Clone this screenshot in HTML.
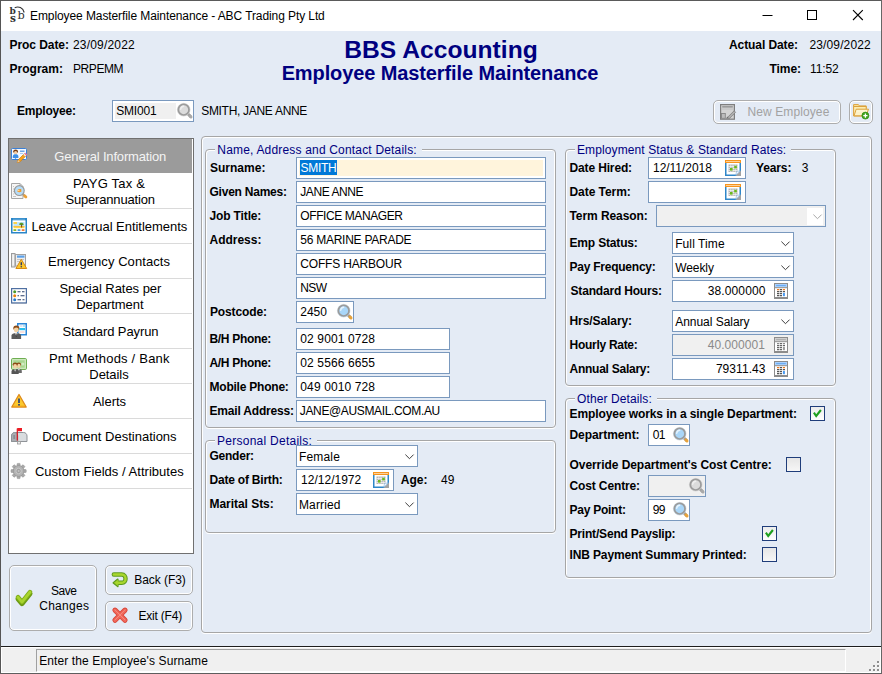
<!DOCTYPE html><html><head><meta charset='utf-8'><title>Employee Masterfile Maintenance</title><style>
*{box-sizing:border-box;margin:0;padding:0}
html,body{width:882px;height:674px;overflow:hidden;background:#fff}
body{font-family:"Liberation Sans",Arial,sans-serif;font-size:12px;color:#000;position:relative}
.a{position:absolute;white-space:nowrap}
.b{font-weight:bold}
.t{position:absolute;white-space:nowrap;line-height:14px;height:14px}
.inp{position:absolute;background:#fff;border:1px solid #7a99be;height:22px}
.dis{background:#f0f0f0}
.gb{position:absolute;border:1px solid #a6a6a6;border-radius:4px;box-shadow:inset 1px 1px 0 #fff, inset -1px 0 0 #fff, 0 1px 0 #fff}
.lg{position:absolute;background:#e4ebf5;height:4px}
.cb{position:absolute;width:15px;height:15px;background:linear-gradient(#ececec,#fff);border:1px solid #1f3d7a}
.btn{position:absolute;border:1px solid #adadad;border-radius:5px;box-shadow:inset 0 0 0 1px #fff;background:#e4ebf5}
.mi{position:absolute;left:9px;width:183px;height:35px;border-bottom:1px solid #dadada;background:#fff}
svg{position:absolute;overflow:visible}
</style></head><body>
<div class='a' style='left:0;top:0;width:882px;height:674px;background:#fff'></div>
<div class='a' style='left:1px;top:31px;width:880px;height:616px;background:#e4ebf5'></div>
<div class='a' style='left:0;top:0;width:882px;height:1px;background:#5a5a5a'></div>
<div class='a' style='left:0;top:0;width:1px;height:674px;background:#555'></div>
<svg style='left:9px;top:6px' width='18' height='18' viewBox='0 0 18 18'>
<text x='0.600' y='8' font-family='DejaVu Serif,serif' font-size='9' font-weight='bold' fill='#333'>b</text>
<text x='0.900' y='15.600' font-family='DejaVu Serif,serif' font-size='10.500' font-weight='bold' fill='#333'>s</text>
<text x='8.600' y='12.800' font-family='DejaVu Serif,serif' font-size='11.300' fill='#333'>b</text>
<path d='M5.700 1.700C9.500 0 14 1.500 15.200 6.500' fill='none' stroke='#333' stroke-width='1.100'/>
</svg>
<div class='t' style='left:30px;top:9px;letter-spacing:-0.09px;'>Employee Masterfile Maintenance - ABC Trading Pty Ltd</div>
<svg style='left:760px;top:9px' width='112' height='14' viewBox='0 0 112 14'>
<path d='M2.500 6.500h10' stroke='#000' stroke-width='1' fill='none'/>
<rect x='47.500' y='1.500' width='9' height='9' stroke='#000' stroke-width='1' fill='none'/>
<path d='M93 1.200l9.800 9.800M102.800 1.200l-9.800 9.800' stroke='#000' stroke-width='1.100' fill='none'/>
</svg>
<div class='t b' style='left:9.5px;top:38px;letter-spacing:-0.06px;'>Proc Date:</div>
<div class='t' style='left:73px;top:38px;letter-spacing:0.18px;'>23/09/2022</div>
<div class='t b' style='left:9.5px;top:62px;letter-spacing:0.02px;'>Program:</div>
<div class='t' style='left:73px;top:62px;letter-spacing:-0.43px;'>PRPEMM</div>
<div class='t b' style='left:729px;top:38px;letter-spacing:-0.09px;'>Actual Date:</div>
<div class='t' style='left:809.5px;top:38px;letter-spacing:0.12px;'>23/09/2022</div>
<div class='t b' style='left:769.5px;top:62px;letter-spacing:-0.07px;'>Time:</div>
<div class='t' style='left:810px;top:62px;letter-spacing:-0.12px;'>11:52</div>
<div class='a b' style='left:1px;width:880px;top:35px;text-align:center;font-size:24.6px;letter-spacing:0.03px;line-height:29px;color:#000080'>BBS Accounting</div>
<div class='a b' style='left:0px;width:880px;top:61px;text-align:center;font-size:20px;letter-spacing:-0.11px;line-height:24px;color:#000080'>Employee Masterfile Maintenance</div>
<div class='t b' style='left:17px;top:104px;letter-spacing:-0.21px;'>Employee:</div>
<div class='inp ' style='left:112px;top:100px;width:82px;'></div>
<div class='a' style='left:115px;top:103px;width:61px;height:16px;background:#f0f0f0'></div>
<div class='t' style='left:116.2px;top:104px;letter-spacing:-0.18px;'>SMI001</div>
<svg style='left:177px;top:103px' width='16' height='16' viewBox='0 0 16 16'>
<path d='M11 11l2.300 2.300' stroke='#9c9c9c' stroke-width='3' stroke-linecap='round'/>
<path d='M12.900 12.900l1.100 1.100' stroke='#a9a9a9' stroke-width='3' stroke-linecap='round'/>
<circle cx='6.700' cy='6.700' r='6.300' fill='#dcdcdc' stroke='#cfcfcf' stroke-width='0.700'/>
<circle cx='6.700' cy='6.700' r='5.300' fill='none' stroke='#9c9c9c' stroke-width='1.700'/>
<path d='M3.700 6.200a3.200 3.200 0 0 1 3-3' fill='none' stroke='#f0f0f0' stroke-width='1.400' stroke-linecap='round'/>
</svg>
<div class='t' style='left:201.2px;top:104px;letter-spacing:-0.3px;'>SMITH, JANE ANNE</div>
<div class='btn' style='left:713px;top:100px;width:128px;height:24px'></div>
<svg style='left:720px;top:104px' width='17' height='16' viewBox='0 0 17 16'>
<rect x='0.600' y='0.600' width='13.800' height='14.600' fill='#d3d3d3' stroke='#7e7e7e' stroke-width='1.200'/>
<path d='M2.200 2.800h10.600' stroke='#9a9a9a' stroke-width='1.700'/><path d='M1.500 5h12' stroke='#bdbdbd' stroke-width='0.800'/>
<rect x='1.500' y='9.500' width='3.800' height='4.800' fill='#bcbcbc' stroke='#858585' stroke-width='0.900'/>
<path d='M7.300 13.600l6.800-6.800 1.500 1.500-6.800 6.800z' fill='#b0b0b0' stroke='#808080' stroke-width='0.800'/><path d='M6.200 15l1.100-2.400 1.400 1.400z' fill='#6e6e6e'/>
</svg>
<div class='t' style='left:747.5px;top:105px;letter-spacing:0.1px;color:#a2a2a2;'>New Employee</div>
<div class='btn' style='left:849px;top:100px;width:24px;height:24px'></div>
<svg style='left:853px;top:104px' width='17' height='16' viewBox='0 0 17 16'>
<path d='M0.600 0.600h4.800l1 1.300h6.800v2.500h-12.600z' fill='#fbe6a0' stroke='#dca23c' stroke-width='1'/>
<path d='M0.600 2.500h12.600v9.500h-12.600z' fill='#fcecb0' stroke='#dca23c' stroke-width='1'/>
<path d='M1 11.800l2.200-6.600h12.300l-2.400 6.600z' fill='#fdf2c8' stroke='#dca23c' stroke-width='1'/>
<path d='M3.500 7h10.500' stroke='#fff8dc' stroke-width='0.900'/>
<circle cx='12.400' cy='11.600' r='3.500' fill='#3fa51c' stroke='#2f8a12' stroke-width='0.700'/>
<path d='M12.400 9.500v4.200M10.300 11.600h4.200' stroke='#fff' stroke-width='1.300'/>
</svg>
<div class='a' style='left:8px;top:138px;width:186px;height:416px;background:#fff;border:1px solid #707070'></div>
<div class='mi' style='top:139px;height:34px;background:#9b9b9b;border-bottom:0;'></div>
<div class='t' style='left:54.3px;top:149px;font-size:13px;line-height:16px;height:16px;letter-spacing:-0.16px;color:#f4f4f4;'>General Information</div>
<div class='mi' style='top:174px;'></div>
<div class='t' style='left:73.1px;top:176px;font-size:13px;line-height:16px;height:16px;letter-spacing:0.18px;'>PAYG Tax &amp;</div>
<div class='t' style='left:65.4px;top:192px;font-size:13px;line-height:16px;height:16px;letter-spacing:-0.17px;'>Superannuation</div>
<div class='mi' style='top:209px;'></div>
<div class='t' style='left:31.4px;top:219px;font-size:13px;line-height:16px;height:16px;letter-spacing:-0.04px;'>Leave Accrual Entitlements</div>
<div class='mi' style='top:244px;'></div>
<div class='t' style='left:48.1px;top:254px;font-size:13px;line-height:16px;height:16px;letter-spacing:0.07px;'>Emergency Contacts</div>
<div class='mi' style='top:279px;'></div>
<div class='t' style='left:59.4px;top:281px;font-size:13px;line-height:16px;height:16px;letter-spacing:-0.04px;'>Special Rates per</div>
<div class='t' style='left:76.3px;top:297px;font-size:13px;line-height:16px;height:16px;letter-spacing:-0.08px;'>Department</div>
<div class='mi' style='top:314px;'></div>
<div class='t' style='left:62.4px;top:324px;font-size:13px;line-height:16px;height:16px;letter-spacing:-0.1px;'>Standard Payrun</div>
<div class='mi' style='top:349px;'></div>
<div class='t' style='left:48.9px;top:351px;font-size:13px;line-height:16px;height:16px;letter-spacing:0.21px;'>Pmt Methods / Bank</div>
<div class='t' style='left:89.3px;top:367px;font-size:13px;line-height:16px;height:16px;letter-spacing:-0.06px;'>Details</div>
<div class='mi' style='top:384px;'></div>
<div class='t' style='left:93px;top:394px;font-size:13px;line-height:16px;height:16px;letter-spacing:-0.05px;'>Alerts</div>
<div class='mi' style='top:419px;'></div>
<div class='t' style='left:42.2px;top:429px;font-size:13px;line-height:16px;height:16px;'>Document Destinations</div>
<div class='mi' style='top:454px;'></div>
<div class='t' style='left:34.9px;top:464px;font-size:13px;line-height:16px;height:16px;letter-spacing:0.03px;'>Custom Fields / Attributes</div>
<svg style='left:11px;top:148px' width='16' height='16' viewBox='0 0 16 16'><rect x='0.500' y='0.500' width='15' height='11' rx='1' fill='#f4f9ff' stroke='#3a80d6'/>
<ellipse cx='4.600' cy='3.400' rx='2.400' ry='2' fill='#7a3d10'/><circle cx='4.600' cy='4.600' r='1.600' fill='#f3cfa8'/>
<path d='M1.800 10v-1.500c0-1.600 1.200-2.200 2.800-2.200s2.800 0.600 2.800 2.200v1.500z' fill='#3d8fe6'/>
<path d='M9 3.200h4.500' stroke='#4a90e0' stroke-width='1.200'/><path d='M9 5.500h3' stroke='#a9cdf2' stroke-width='1'/>
<path d='M1.500 11.500h2l1-1.200 1 1.200h5' stroke='#3a80d6' fill='none' stroke-width='0.800'/>
<path d='M6.200 14.600l0.900-2.700 6.300-6.300 1.900 1.900-6.300 6.300z' fill='#f7a21b' stroke='#c9780c' stroke-width='0.700'/>
<path d='M6.200 14.600l0.900-2.700 1.800 1.800z' fill='#e9c79a'/>
<path d='M12.300 6.700l1.100-1.100 1.900 1.900-1.100 1.100z' fill='#e8e8e8'/>
<path d='M13.400 5.600l0.900-0.900 1.900 1.900-0.900 0.900z' fill='#ea6cb2'/></svg>
<svg style='left:11px;top:183px' width='16' height='16' viewBox='0 0 16 16'><path d='M0.500 0.500h8.500l3 3v12h-11.500z' fill='#f6f6f6' stroke='#a6a6a6'/><path d='M9 0.500v3h3' fill='none' stroke='#a6a6a6' stroke-width='0.800'/>
<path d='M2 3.500h1M2 6h1M2 8.500h1M2 11h1M2 13.500h3' stroke='#bdbdbd' stroke-width='0.800'/>
<path d='M12 11.200l2 2' stroke='#9a9a9a' stroke-width='2.200' stroke-linecap='round'/><path d='M13.600 12.800l1.300 1.300' stroke='#eaa13a' stroke-width='2.800' stroke-linecap='round'/>
<circle cx='8.300' cy='7.600' r='4.900' fill='#b5dcf8' stroke='#9a9a9a' stroke-width='1.200'/>
<path d='M6.300 8.600c0-2 1.500-2.800 4-2.400v2.600c-1.500 0.600-3 0.600-4-0.200z' fill='#f39a2a'/><path d='M6.500 7.600h2' stroke='#fde3b8' stroke-width='0.900'/></svg>
<svg style='left:11px;top:218px' width='16' height='16' viewBox='0 0 16 16'><rect x='0.750' y='0.750' width='14.500' height='14' fill='#fff' stroke='#2a86c8' stroke-width='1.500'/><rect x='0' y='0' width='16' height='2.300' fill='#2a86c8'/><path d='M2 1.200h12' stroke='#8cc4ea' stroke-width='0.600'/>
<rect x='2.500' y='4' width='11' height='4' fill='#bfe6fb'/><rect x='2.500' y='4' width='3.500' height='2' fill='#fbd34a'/>
<rect x='2.500' y='8' width='11' height='2.200' fill='#fbd34a'/><path d='M2.500 8.400h11' stroke='#f7b93a' stroke-width='0.800'/>
<path d='M8 6.500c0.300-2.200 4.500-2.300 4.700 0.200c-1 0.600-3.600 0.600-4.700-0.200z' fill='#5a9e2a'/><path d='M10.600 6.500v3' stroke='#7a4a1a' stroke-width='1'/>
<rect x='2.500' y='11.200' width='2.800' height='1.800' fill='#8bb82a'/><rect x='6.600' y='11.200' width='2.800' height='1.800' fill='#4a9ee0'/><rect x='10.700' y='11.200' width='2.800' height='1.800' fill='#f07a3a'/></svg>
<svg style='left:11px;top:253px' width='16' height='16' viewBox='0 0 16 16'><rect x='0.500' y='0.500' width='3.500' height='13.500' fill='#e3e3e3' stroke='#9c9c9c'/><path d='M2.200 2v10' stroke='#fff' stroke-width='0.900'/>
<rect x='4.500' y='1.500' width='10' height='11.500' fill='#eeeeee' stroke='#a2a2a2'/><rect x='6' y='2.500' width='7.500' height='2.200' fill='#5aa0ea'/><path d='M6 6.500h7M6 8.500h3' stroke='#c4c4c4'/>
<path d='M10.300 6.300l5.400 9.200h-10.800z' fill='#fbc72c' stroke='#d68a14' stroke-width='1' stroke-linejoin='round'/><path d='M10.300 9.300v3' stroke='#2a3a6a' stroke-width='1.400'/><circle cx='10.300' cy='13.700' r='0.800' fill='#2a3a6a'/></svg>
<svg style='left:11px;top:288px' width='16' height='16' viewBox='0 0 16 16'><rect x='0.600' y='0.600' width='14.800' height='14.300' fill='#fff' stroke='#4f70a2' stroke-width='1.200'/><path d='M0.500 15.500h15' stroke='#8a9ab4' stroke-width='0.800'/>
<circle cx='3.700' cy='3.800' r='1.500' fill='#4a9a2a'/><circle cx='3.700' cy='7.800' r='1.500' fill='#e8820e'/><circle cx='3.700' cy='11.800' r='1.500' fill='#2a7ac8'/>
<path d='M6.500 3.800h3M11 3.800h2.500M6.500 7.800h1.500M9.500 7.800h4M6.500 11.800h3.500M11.500 11.800h2' stroke='#2a3f6a' stroke-width='1.100'/></svg>
<svg style='left:11px;top:323px' width='16' height='16' viewBox='0 0 16 16'><rect x='6.750' y='0.750' width='8.500' height='11' fill='#fff' stroke='#2a86d8' stroke-width='1.500'/><path d='M8.500 3h3' stroke='#b8b8d8' stroke-width='0.800'/><circle cx='13' cy='3' r='0.700' fill='#28b8e8'/><rect x='8.200' y='5' width='5.800' height='2.200' fill='#28c0ee'/><path d='M8.500 9h5' stroke='#e8a8a0' stroke-width='0.700'/>
<path d='M0.500 16v-3.500c0-1.500 2-2.500 4.800-2.500s4.800 1 4.800 2.500v3.500z' fill='#5a5a5a'/><path d='M4 10.200l1.300 2.800 1.300-2.800z' fill='#fff'/><path d='M5.300 10.800v3' stroke='#333' stroke-width='0.800'/>
<ellipse cx='5.300' cy='5' rx='3' ry='2.600' fill='#8a4a14'/><ellipse cx='5.300' cy='6.800' rx='2.300' ry='2.700' fill='#f4d2a4'/><path d='M2.600 5.500c0.600-2.800 5-2.800 5.500 0c-1.800-1.300-3.800-1.300-5.500 0z' fill='#8a4a14'/></svg>
<svg style='left:11px;top:358px' width='16' height='16' viewBox='0 0 16 16'><rect x='0.500' y='0.500' width='15' height='11' rx='1.300' fill='#d2ebc4' stroke='#6fae52'/><rect x='2' y='2' width='12' height='8' fill='#a9d690' stroke='#c4e4b2' stroke-width='0.800'/><circle cx='11.800' cy='6' r='1.600' fill='#d2ebc4'/>
<path d='M4.800 15v-2.300c0-1.200 1.300-1.900 3-1.900s3 0.700 3 1.900v2.300z' fill='#6a6a6a'/><path d='M7.200 10.900l0.700 2 0.700-2z' fill='#fff'/>
<ellipse cx='7.800' cy='6.400' rx='2.300' ry='2' fill='#8a4a14'/><ellipse cx='7.800' cy='7.800' rx='1.800' ry='2.100' fill='#f4d2a4'/>
<path d='M0.500 16v-2.500c0-1.400 1.500-2.200 3.600-2.200s3.600 0.800 3.600 2.200v2.500z' fill='#555'/><path d='M3.300 11.400l0.800 2.300 0.800-2.300z' fill='#fff'/>
<ellipse cx='4.100' cy='6.600' rx='2.500' ry='2.200' fill='#8a4a14'/><ellipse cx='4.100' cy='8.200' rx='1.900' ry='2.300' fill='#f4d2a4'/></svg>
<svg style='left:11px;top:393px' width='16' height='16' viewBox='0 0 16 16'><path d='M8 1.500l7.200 12.500h-14.400z' fill='#fbc92e' stroke='#df8a1a' stroke-width='1.300' stroke-linejoin='round'/><path d='M2.500 13h11' stroke='#f5b01c' stroke-width='1'/><path d='M8 5.500v4.500' stroke='#27407a' stroke-width='1.700'/><rect x='7.150' y='11' width='1.700' height='1.600' fill='#27407a'/></svg>
<svg style='left:11px;top:428px' width='16' height='16' viewBox='0 0 16 16'><path d='M0.500 13.500v-5.500c0-2 1.500-3.500 3.200-3.500h9c1.800 0 3.300 1.500 3.300 3.500v5.500z' fill='#d9dcdf' stroke='#8f9398'/><path d='M0.500 13.500v-5.500c0-2 1.400-3.500 3.100-3.500s3.100 1.500 3.100 3.500v5.500z' fill='#a9adb2' stroke='#8f9398'/><rect x='2.300' y='7' width='1.800' height='4' fill='#8a8e93'/>
<rect x='6.500' y='13.500' width='3' height='2.500' fill='#eee' stroke='#9a9a9a' stroke-width='0.800'/>
<path d='M6.300 0.500v12' stroke='#d8141c' stroke-width='1.200'/><rect x='6.300' y='0' width='4.700' height='3.200' fill='#ec1c24'/></svg>
<svg style='left:11px;top:463px' width='16' height='16' viewBox='0 0 16 16'><g transform='translate(7.600 8)'><g fill='#a9a9a9' stroke='#8c8c8c' stroke-width='0.500'><rect x='-1.500' y='-7.600' width='3' height='15.200' rx='0.500'/><rect x='-1.500' y='-7.600' width='3' height='15.200' rx='0.500' transform='rotate(45)'/><rect x='-1.500' y='-7.600' width='3' height='15.200' rx='0.500' transform='rotate(90)'/><rect x='-1.500' y='-7.600' width='3' height='15.200' rx='0.500' transform='rotate(135)'/></g><circle r='5.400' fill='#b4b4b4' stroke='#929292' stroke-width='0.700'/><circle r='2.700' fill='#a0a0a0' stroke='#c9c9c9' stroke-width='1'/><circle r='1' fill='#c4c4c4'/></g></svg>
<div class='btn' style='left:9px;top:565px;width:88px;height:66px'></div>
<div class='btn' style='left:105px;top:565px;width:88px;height:30px'></div>
<div class='btn' style='left:105px;top:601px;width:88px;height:30px'></div>
<svg style='left:15px;top:589px' width='18' height='18' viewBox='0 0 18 18'>
<path d='M3 9.800l4 4.800L15 4.600' fill='none' stroke='#6b9a12' stroke-width='5' stroke-linecap='round' stroke-linejoin='round'/>
<path d='M3 8.300l4 4.800L15 3.100' fill='none' stroke='#7fae1a' stroke-width='4.600' stroke-linecap='round' stroke-linejoin='round'/>
<path d='M3 8.300l4 4.800L15 3.100' fill='none' stroke='#a8d42e' stroke-width='2.800' stroke-linecap='round' stroke-linejoin='round'/></svg>
<div class='t' style='left:51.1px;top:584px;letter-spacing:-0.49px;'>Save</div>
<div class='t' style='left:39.2px;top:599px;letter-spacing:0.29px;'>Changes</div>
<svg style='left:111px;top:571px' width='18' height='17' viewBox='0 0 18 17'>
<g fill='none' stroke-linecap='round' stroke-linejoin='round'>
<path d='M2.800 3.500h8c5 0 5 8.300 0 8.300h-5' stroke='#5e9a1e' stroke-width='4.400'/>
<path d='M6.800 8.200l-4.500 3.600 4.500 3.600z' fill='#5e9a1e' stroke='#5e9a1e' stroke-width='1.600'/>
<path d='M2.800 3.500h8c5 0 5 8.300 0 8.300h-5' stroke='#a8d62e' stroke-width='2.400'/>
<path d='M6.600 9.300l-3.200 2.500 3.200 2.500z' fill='#a8d62e' stroke='#a8d62e' stroke-width='0.600'/>
</g></svg>
<div class='t' style='left:134.2px;top:573px;letter-spacing:-0.05px;'>Back (F3)</div>
<svg style='left:112px;top:607px' width='16' height='16' viewBox='0 0 16 16'>
<g fill='none' stroke-linecap='round'>
<path d='M3 3.200l10 10M13 3.200l-10 10' stroke='#d8473a' stroke-width='5.200'/>
<path d='M3 3.200l10 10M13 3.200l-10 10' stroke='#f0675a' stroke-width='3.400'/>
<path d='M3 3l10 10M13 3l-10 10' stroke='#f68a7e' stroke-width='1'/>
</g></svg>
<div class='t' style='left:138.4px;top:609px;letter-spacing:-0.2px;'>Exit (F4)</div>
<div class='gb' style='left:201px;top:136px;width:671px;height:497px;border-radius:4px'></div>
<div class='gb' style='left:205px;top:149px;width:351px;height:279px'></div>
<div class='lg' style='left:215.3px;top:148px;width:206.7px'></div>
<div class='t' style='left:217.3px;top:143px;letter-spacing:0.18px;color:#000080;'>Name, Address and Contact Details:</div>
<div class='gb' style='left:205px;top:440px;width:351px;height:93px'></div>
<div class='lg' style='left:215px;top:439px;width:101.5px'></div>
<div class='t' style='left:217px;top:434px;letter-spacing:0.26px;color:#000080;'>Personal Details:</div>
<div class='gb' style='left:565px;top:149px;width:271px;height:237px'></div>
<div class='lg' style='left:575px;top:148px;width:216px'></div>
<div class='t' style='left:577px;top:143px;letter-spacing:0.11px;color:#000080;'>Employment Status &amp; Standard Rates:</div>
<div class='gb' style='left:565px;top:398px;width:271px;height:180px'></div>
<div class='lg' style='left:575px;top:397px;width:81.5px'></div>
<div class='t' style='left:577px;top:392px;letter-spacing:0.11px;color:#000080;'>Other Details:</div>
<div class='t b' style='left:210px;top:161px;letter-spacing:0.01px;'>Surname:</div>
<div class='inp ' style='left:296px;top:157px;width:250px;background:#fff4dc;box-shadow:inset 0 0 0 2px #fff'></div>
<div class='a' style='left:300px;top:160px;width:36.500px;height:15px;background:#0078d7'></div>
<div class='t' style='left:300.5px;top:161px;letter-spacing:-0.29px;color:#fff;'>SMITH</div>
<div class='t b' style='left:209.5px;top:185px;letter-spacing:-0.23px;'>Given Names:</div>
<div class='inp ' style='left:296px;top:181px;width:250px;'></div>
<div class='t' style='left:300.3px;top:185px;letter-spacing:-0.44px;'>JANE ANNE</div>
<div class='t b' style='left:209.5px;top:209px;letter-spacing:-0.14px;'>Job Title:</div>
<div class='inp ' style='left:296px;top:205px;width:250px;'></div>
<div class='t' style='left:300.3px;top:209px;letter-spacing:-0.41px;'>OFFICE MANAGER</div>
<div class='t b' style='left:209.5px;top:233px;letter-spacing:-0.02px;'>Address:</div>
<div class='inp ' style='left:296px;top:229px;width:250px;'></div>
<div class='t' style='left:300.3px;top:233px;letter-spacing:-0.26px;'>56 MARINE PARADE</div>
<div class='inp ' style='left:296px;top:253px;width:250px;'></div>
<div class='t' style='left:300.3px;top:257px;letter-spacing:-0.18px;'>COFFS HARBOUR</div>
<div class='inp ' style='left:296px;top:277px;width:250px;'></div>
<div class='t' style='left:300.3px;top:281px;letter-spacing:-0.6px;'>NSW</div>
<div class='t b' style='left:210px;top:305px;letter-spacing:-0.13px;'>Postcode:</div>
<div class='inp ' style='left:296px;top:301px;width:58px;'></div>
<div class='t' style='left:300.3px;top:305px;letter-spacing:-0.04px;'>2450</div>
<svg style='left:337px;top:304px' width='16' height='16' viewBox='0 0 16 16'>
<path d='M11 11l2.300 2.300' stroke='#9b9b9b' stroke-width='3' stroke-linecap='round'/>
<path d='M12.900 12.900l1.100 1.100' stroke='#e8a33a' stroke-width='3' stroke-linecap='round'/>
<circle cx='6.700' cy='6.700' r='6.300' fill='#a9d6f8' stroke='#cfd3d6' stroke-width='0.700'/>
<circle cx='6.700' cy='6.700' r='5.300' fill='none' stroke='#9b9b9b' stroke-width='1.700'/>
<path d='M3.700 6.200a3.200 3.200 0 0 1 3-3' fill='none' stroke='#e6f4fe' stroke-width='1.400' stroke-linecap='round'/>
</svg>
<div class='t b' style='left:209.5px;top:332px;letter-spacing:-0.32px;'>B/H Phone:</div>
<div class='inp ' style='left:296px;top:328px;width:154px;'></div>
<div class='t' style='left:300.3px;top:332px;letter-spacing:0.12px;'>02 9001 0728</div>
<div class='t b' style='left:209.5px;top:356px;letter-spacing:-0.32px;'>A/H Phone:</div>
<div class='inp ' style='left:296px;top:352px;width:154px;'></div>
<div class='t' style='left:300.3px;top:356px;letter-spacing:0.12px;'>02 5566 6655</div>
<div class='t b' style='left:209.5px;top:380px;letter-spacing:-0.22px;'>Mobile Phone:</div>
<div class='inp ' style='left:296px;top:376px;width:154px;'></div>
<div class='t' style='left:300.3px;top:380px;letter-spacing:0.12px;'>049 0010 728</div>
<div class='t b' style='left:209.5px;top:404px;letter-spacing:-0.18px;'>Email Address:</div>
<div class='inp ' style='left:296px;top:400px;width:250px;'></div>
<div class='t' style='left:299.8px;top:404px;letter-spacing:-0.36px;'>JANE@AUSMAIL.COM.AU</div>
<div class='t b' style='left:209.5px;top:449px;letter-spacing:-0.24px;'>Gender:</div>
<div class='inp ' style='left:296px;top:445px;width:122px;'></div>
<svg style='left:404.7px;top:454px' width='9' height='6' viewBox='0 0 9 6'><path d='M0.400 0.600l4.100 4.100 4.100-4.100' fill='none' stroke='#3c3c3c' stroke-width='1'/></svg>
<div class='t' style='left:299px;top:450px;letter-spacing:0.17px;'>Female</div>
<div class='t b' style='left:209.5px;top:473px;letter-spacing:-0.21px;'>Date of Birth:</div>
<div class='inp ' style='left:296px;top:469px;width:98px;'></div>
<div class='t' style='left:301px;top:473px;letter-spacing:0.02px;'>12/12/1972</div>
<svg style='left:373px;top:472px' width='16' height='16' viewBox='0 0 16 16'>
<rect x='0.750' y='0.750' width='14.500' height='14.500' fill='#fff' stroke='#2e86c9' stroke-width='1.500'/>
<rect x='0' y='0' width='16' height='3' fill='#f7941d'/>
<rect x='1' y='1' width='14' height='1' fill='#fcd09a'/>
<rect x='3.500' y='4.500' width='9' height='7.500' fill='#b4b4b4'/>
<path d='M3.500 6.500h9M3.500 8.500h9M3.500 10.500h9M5.750 4.500v7.500M8 4.500v7.500M10.250 4.500v7.500' stroke='#fff' stroke-width='0.600'/>
<rect x='5' y='8' width='2.600' height='2.600' fill='#6cb81c'/>
<rect x='9.200' y='5.800' width='2.600' height='2.600' fill='#6cb81c'/>
<path d='M10.500 16L16 10.500V16z' fill='#a3a3a3'/>
<path d='M10.800 15.200l0.700-3.700 3.700-0.700z' fill='#f4f7fb' stroke='#7fb0dd' stroke-width='0.600'/>
</svg>
<div class='t b' style='left:400.8px;top:473px;'>Age:</div>
<div class='t' style='left:441px;top:473px;'>49</div>
<div class='t b' style='left:209.5px;top:497px;letter-spacing:-0.04px;'>Marital Sts:</div>
<div class='inp ' style='left:296px;top:493px;width:122px;'></div>
<svg style='left:404.7px;top:502px' width='9' height='6' viewBox='0 0 9 6'><path d='M0.400 0.600l4.100 4.100 4.100-4.100' fill='none' stroke='#3c3c3c' stroke-width='1'/></svg>
<div class='t' style='left:299px;top:498px;letter-spacing:0.12px;'>Married</div>
<div class='t b' style='left:569.5px;top:161px;letter-spacing:-0.14px;'>Date Hired:</div>
<div class='inp ' style='left:648px;top:157px;width:98px;'></div>
<div class='t' style='left:653px;top:161px;letter-spacing:-0.03px;'>12/11/2018</div>
<svg style='left:725px;top:160px' width='16' height='16' viewBox='0 0 16 16'>
<rect x='0.750' y='0.750' width='14.500' height='14.500' fill='#fff' stroke='#2e86c9' stroke-width='1.500'/>
<rect x='0' y='0' width='16' height='3' fill='#f7941d'/>
<rect x='1' y='1' width='14' height='1' fill='#fcd09a'/>
<rect x='3.500' y='4.500' width='9' height='7.500' fill='#b4b4b4'/>
<path d='M3.500 6.500h9M3.500 8.500h9M3.500 10.500h9M5.750 4.500v7.500M8 4.500v7.500M10.250 4.500v7.500' stroke='#fff' stroke-width='0.600'/>
<rect x='5' y='8' width='2.600' height='2.600' fill='#6cb81c'/>
<rect x='9.200' y='5.800' width='2.600' height='2.600' fill='#6cb81c'/>
<path d='M10.500 16L16 10.500V16z' fill='#a3a3a3'/>
<path d='M10.800 15.200l0.700-3.700 3.700-0.700z' fill='#f4f7fb' stroke='#7fb0dd' stroke-width='0.600'/>
</svg>
<div class='t b' style='left:756px;top:161px;letter-spacing:-0.13px;'>Years:</div>
<div class='t' style='left:801.7px;top:161px;'>3</div>
<div class='t b' style='left:569.5px;top:185px;letter-spacing:-0.06px;'>Date Term:</div>
<div class='inp ' style='left:648px;top:181px;width:98px;'></div>
<svg style='left:725px;top:184px' width='16' height='16' viewBox='0 0 16 16'>
<rect x='0.750' y='0.750' width='14.500' height='14.500' fill='#fff' stroke='#2e86c9' stroke-width='1.500'/>
<rect x='0' y='0' width='16' height='3' fill='#f7941d'/>
<rect x='1' y='1' width='14' height='1' fill='#fcd09a'/>
<rect x='3.500' y='4.500' width='9' height='7.500' fill='#b4b4b4'/>
<path d='M3.500 6.500h9M3.500 8.500h9M3.500 10.500h9M5.750 4.500v7.500M8 4.500v7.500M10.250 4.500v7.500' stroke='#fff' stroke-width='0.600'/>
<rect x='5' y='8' width='2.600' height='2.600' fill='#6cb81c'/>
<rect x='9.200' y='5.800' width='2.600' height='2.600' fill='#6cb81c'/>
<path d='M10.500 16L16 10.500V16z' fill='#a3a3a3'/>
<path d='M10.800 15.200l0.700-3.700 3.700-0.700z' fill='#f4f7fb' stroke='#7fb0dd' stroke-width='0.600'/>
</svg>
<div class='t b' style='left:569.5px;top:209px;letter-spacing:-0.08px;'>Term Reason:</div>
<div class='inp dis' style='left:656px;top:205px;width:170px;'></div>
<div class='a' style='left:807px;top:208px;width:16px;height:17px;background:#fff'></div>
<svg style='left:812.7px;top:214px' width='9' height='6' viewBox='0 0 9 6'><path d='M0.400 0.600l4.100 4.100 4.100-4.100' fill='none' stroke='#a8a8a8' stroke-width='1'/></svg>
<div class='t b' style='left:569.5px;top:236px;letter-spacing:-0.17px;'>Emp Status:</div>
<div class='inp ' style='left:672px;top:232px;width:122px;'></div>
<svg style='left:780.7px;top:241px' width='9' height='6' viewBox='0 0 9 6'><path d='M0.400 0.600l4.100 4.100 4.100-4.100' fill='none' stroke='#3c3c3c' stroke-width='1'/></svg>
<div class='t' style='left:675.2px;top:237px;letter-spacing:0.09px;'>Full Time</div>
<div class='t b' style='left:569.5px;top:260px;letter-spacing:-0.24px;'>Pay Frequency:</div>
<div class='inp ' style='left:672px;top:256px;width:122px;'></div>
<svg style='left:780.7px;top:265px' width='9' height='6' viewBox='0 0 9 6'><path d='M0.400 0.600l4.100 4.100 4.100-4.100' fill='none' stroke='#3c3c3c' stroke-width='1'/></svg>
<div class='t' style='left:675.2px;top:261px;letter-spacing:-0.08px;'>Weekly</div>
<div class='t b' style='left:570.5px;top:284px;letter-spacing:-0.18px;'>Standard Hours:</div>
<div class='inp ' style='left:672px;top:280px;width:122px;'></div>
<div class='t' style='left:707.7px;top:284px;letter-spacing:0.13px;'>38.000000</div>
<svg style='left:774px;top:283px' width='14' height='16' viewBox='0 0 14 16'>
<rect x='0.500' y='0.500' width='13' height='15' fill='#fff' stroke='#8c8c8c'/>
<rect x='0' y='14' width='14' height='2' fill='#8c8c8c'/>
<rect x='1' y='1' width='12' height='3.200' fill='#a9d1ff'/>
<path d='M2.200 2.600h9.600' stroke='#5fa3ee' stroke-width='0.900'/>
<path d='M1 4.700h12' stroke='#8c8c8c' stroke-width='1'/>
<path d='M5.800 6.600h2.200M3 8.600h2.200M5.800 8.600h2.200M8.800 8.600h2.200M3 10.600h2.200M5.800 10.600h2.200M3 12.600h2.200M5.800 12.600h2.200' stroke='#555' stroke-width='1.100'/>
<path d='M3 6.600h2.200M8.800 6.600h2.200' stroke='#f07a1e' stroke-width='1.100'/>
<rect x='8.900' y='10' width='2' height='3.200' fill='#4a9af0'/>
</svg>
<div class='t b' style='left:569.5px;top:314px;letter-spacing:-0.08px;'>Hrs/Salary:</div>
<div class='inp ' style='left:672px;top:310px;width:122px;'></div>
<svg style='left:780.7px;top:319px' width='9' height='6' viewBox='0 0 9 6'><path d='M0.400 0.600l4.100 4.100 4.100-4.100' fill='none' stroke='#3c3c3c' stroke-width='1'/></svg>
<div class='t' style='left:675.2px;top:315px;letter-spacing:-0.03px;'>Annual Salary</div>
<div class='t b' style='left:569.5px;top:338px;letter-spacing:-0.28px;'>Hourly Rate:</div>
<div class='inp dis' style='left:672px;top:334px;width:122px;'></div>
<div class='t' style='left:707.7px;top:338px;letter-spacing:0.07px;color:#8a8a8a;'>40.000001</div>
<svg style='left:774px;top:337px' width='14' height='16' viewBox='0 0 14 16'>
<rect x='0.500' y='0.500' width='13' height='15' fill='#fff' stroke='#8c8c8c'/>
<rect x='0' y='14' width='14' height='2' fill='#8c8c8c'/>
<rect x='1' y='1' width='12' height='3.200' fill='#cfcfcf'/>
<path d='M2.200 2.600h9.600' stroke='#a8a8a8' stroke-width='0.900'/>
<path d='M1 4.700h12' stroke='#8c8c8c' stroke-width='1'/>
<path d='M5.800 6.600h2.200M3 8.600h2.200M5.800 8.600h2.200M8.800 8.600h2.200M3 10.600h2.200M5.800 10.600h2.200M3 12.600h2.200M5.800 12.600h2.200' stroke='#666' stroke-width='1.100'/>
<path d='M3 6.600h2.200M8.800 6.600h2.200' stroke='#8a8a8a' stroke-width='1.100'/>
<rect x='8.900' y='10' width='2' height='3.200' fill='#9a9a9a'/>
</svg>
<div class='t b' style='left:569.5px;top:362px;letter-spacing:-0.25px;'>Annual Salary:</div>
<div class='inp ' style='left:672px;top:358px;width:122px;'></div>
<div class='t' style='left:715.9px;top:362px;letter-spacing:0.06px;'>79311.43</div>
<svg style='left:774px;top:361px' width='14' height='16' viewBox='0 0 14 16'>
<rect x='0.500' y='0.500' width='13' height='15' fill='#fff' stroke='#8c8c8c'/>
<rect x='0' y='14' width='14' height='2' fill='#8c8c8c'/>
<rect x='1' y='1' width='12' height='3.200' fill='#a9d1ff'/>
<path d='M2.200 2.600h9.600' stroke='#5fa3ee' stroke-width='0.900'/>
<path d='M1 4.700h12' stroke='#8c8c8c' stroke-width='1'/>
<path d='M5.800 6.600h2.200M3 8.600h2.200M5.800 8.600h2.200M8.800 8.600h2.200M3 10.600h2.200M5.800 10.600h2.200M3 12.600h2.200M5.800 12.600h2.200' stroke='#555' stroke-width='1.100'/>
<path d='M3 6.600h2.200M8.800 6.600h2.200' stroke='#f07a1e' stroke-width='1.100'/>
<rect x='8.900' y='10' width='2' height='3.200' fill='#4a9af0'/>
</svg>
<div class='t b' style='left:569.5px;top:407px;letter-spacing:-0.09px;'>Employee works in a single Department:</div>
<div class='cb' style='left:810px;top:406px;'></div>
<svg style='left:810px;top:406px' width='15' height='15' viewBox='0 0 15 15'><path d='M3.900 6.700l2.300 3.300 4.700-6' fill='none' stroke='#1fa01f' stroke-width='2.100'/></svg>
<div class='t b' style='left:569.5px;top:428px;letter-spacing:-0.06px;'>Department:</div>
<div class='inp ' style='left:648px;top:424px;width:42px;'></div>
<div class='t' style='left:652.8px;top:428px;letter-spacing:-0.6px;'>01</div>
<svg style='left:673px;top:427px' width='16' height='16' viewBox='0 0 16 16'>
<path d='M11 11l2.300 2.300' stroke='#9b9b9b' stroke-width='3' stroke-linecap='round'/>
<path d='M12.900 12.900l1.100 1.100' stroke='#e8a33a' stroke-width='3' stroke-linecap='round'/>
<circle cx='6.700' cy='6.700' r='6.300' fill='#a9d6f8' stroke='#cfd3d6' stroke-width='0.700'/>
<circle cx='6.700' cy='6.700' r='5.300' fill='none' stroke='#9b9b9b' stroke-width='1.700'/>
<path d='M3.700 6.200a3.200 3.200 0 0 1 3-3' fill='none' stroke='#e6f4fe' stroke-width='1.400' stroke-linecap='round'/>
</svg>
<div class='t b' style='left:569.5px;top:458px;letter-spacing:-0.06px;'>Override Department's Cost Centre:</div>
<div class='cb' style='left:786px;top:457px;background:linear-gradient(#e6e6e6,#f6f6f6)'></div>
<div class='t b' style='left:569.5px;top:479px;letter-spacing:-0.13px;'>Cost Centre:</div>
<div class='inp dis' style='left:648px;top:475px;width:58px;'></div>
<svg style='left:689px;top:478px' width='16' height='16' viewBox='0 0 16 16'>
<path d='M11 11l2.300 2.300' stroke='#9c9c9c' stroke-width='3' stroke-linecap='round'/>
<path d='M12.900 12.900l1.100 1.100' stroke='#a9a9a9' stroke-width='3' stroke-linecap='round'/>
<circle cx='6.700' cy='6.700' r='6.300' fill='#dcdcdc' stroke='#cfcfcf' stroke-width='0.700'/>
<circle cx='6.700' cy='6.700' r='5.300' fill='none' stroke='#9c9c9c' stroke-width='1.700'/>
<path d='M3.700 6.200a3.200 3.200 0 0 1 3-3' fill='none' stroke='#f0f0f0' stroke-width='1.400' stroke-linecap='round'/>
</svg>
<div class='t b' style='left:569.5px;top:503px;letter-spacing:-0.25px;'>Pay Point:</div>
<div class='inp ' style='left:648px;top:499px;width:42px;'></div>
<div class='t' style='left:652.8px;top:503px;letter-spacing:-0.6px;'>99</div>
<svg style='left:673px;top:502px' width='16' height='16' viewBox='0 0 16 16'>
<path d='M11 11l2.300 2.300' stroke='#9b9b9b' stroke-width='3' stroke-linecap='round'/>
<path d='M12.900 12.900l1.100 1.100' stroke='#e8a33a' stroke-width='3' stroke-linecap='round'/>
<circle cx='6.700' cy='6.700' r='6.300' fill='#a9d6f8' stroke='#cfd3d6' stroke-width='0.700'/>
<circle cx='6.700' cy='6.700' r='5.300' fill='none' stroke='#9b9b9b' stroke-width='1.700'/>
<path d='M3.700 6.200a3.200 3.200 0 0 1 3-3' fill='none' stroke='#e6f4fe' stroke-width='1.400' stroke-linecap='round'/>
</svg>
<div class='t b' style='left:569.5px;top:527px;letter-spacing:-0.18px;'>Print/Send Payslip:</div>
<div class='cb' style='left:762px;top:526px;'></div>
<svg style='left:762px;top:526px' width='15' height='15' viewBox='0 0 15 15'><path d='M3.900 6.700l2.300 3.300 4.700-6' fill='none' stroke='#1fa01f' stroke-width='2.100'/></svg>
<div class='t b' style='left:569.5px;top:548px;letter-spacing:-0.13px;'>INB Payment Summary Printed:</div>
<div class='cb' style='left:762px;top:547px;background:linear-gradient(#e6e6e6,#f6f6f6)'></div>
<div class='a' style='left:1px;top:646px;width:880px;height:1px;background:#1e1e1e'></div>
<div class='a' style='left:1px;top:647px;width:880px;height:26px;background:#f0f0f0;border-top:1px solid #fff;border-bottom:1px solid #fff;border-right:1px solid #fff;border-left:1px solid #fff'></div>
<div class='a' style='left:0;top:673px;width:882px;height:1px;background:#5e5e5e'></div>
<div class='a' style='left:36px;top:649px;width:810px;height:23px;border-top:1px solid #a0a0a0;border-left:1px solid #a0a0a0;border-right:1px solid #fff;border-bottom:1px solid #fff'></div>
<div class='t' style='left:39.2px;top:654px;letter-spacing:0.11px;'>Enter the Employee's Surname</div>
<svg style='left:868px;top:661px' width='12' height='11' viewBox='0 0 12 11'><rect x='9.5' y='0.5' width='2' height='2' fill='#fff'/><rect x='9' y='0' width='2' height='2' fill='#8f8f8f'/><rect x='5.5' y='4.5' width='2' height='2' fill='#fff'/><rect x='5' y='4' width='2' height='2' fill='#8f8f8f'/><rect x='9.5' y='4.5' width='2' height='2' fill='#fff'/><rect x='9' y='4' width='2' height='2' fill='#8f8f8f'/><rect x='1.5' y='8.5' width='2' height='2' fill='#fff'/><rect x='1' y='8' width='2' height='2' fill='#8f8f8f'/><rect x='5.5' y='8.5' width='2' height='2' fill='#fff'/><rect x='5' y='8' width='2' height='2' fill='#8f8f8f'/><rect x='9.5' y='8.5' width='2' height='2' fill='#fff'/><rect x='9' y='8' width='2' height='2' fill='#8f8f8f'/></svg>
<div class='a' style='left:881px;top:0;width:1px;height:674px;background:#666'></div>
</body></html>
